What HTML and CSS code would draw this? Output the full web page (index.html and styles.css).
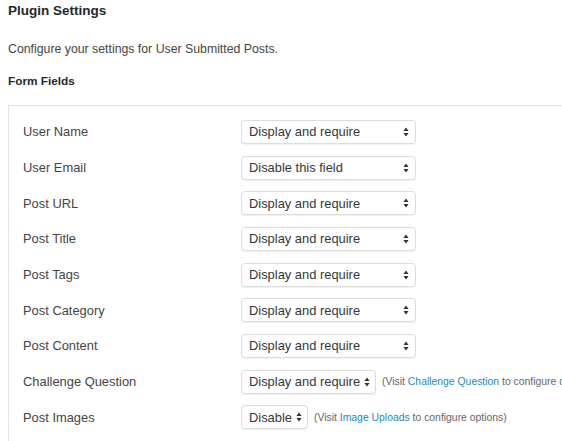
FILE: index.html
```html
<!DOCTYPE html>
<html lang="en">
<head>
<meta charset="utf-8">
<title>Plugin Settings</title>
<link rel="stylesheet" href="styles.css">
</head>
<body>
<div class="page">
  <h1 class="title">Plugin Settings</h1>
  <p class="intro">Configure your settings for User Submitted Posts.</p>
  <h2 class="section">Form Fields</h2>
  <div class="panel">
    <div class="row">
      <span class="label">User Name</span>
      <span class="select wide"><span class="val">Display and require</span><svg class="arr" width="6" height="10" viewBox="0 0 6 10"><path d="M3 0.5L5.6 4H0.4z M3 9.5L5.6 6H0.4z" fill="#333"/></svg></span>
    </div>
    <div class="row">
      <span class="label">User Email</span>
      <span class="select wide"><span class="val">Disable this field</span><svg class="arr" width="6" height="10" viewBox="0 0 6 10"><path d="M3 0.5L5.6 4H0.4z M3 9.5L5.6 6H0.4z" fill="#333"/></svg></span>
    </div>
    <div class="row">
      <span class="label">Post URL</span>
      <span class="select wide"><span class="val">Display and require</span><svg class="arr" width="6" height="10" viewBox="0 0 6 10"><path d="M3 0.5L5.6 4H0.4z M3 9.5L5.6 6H0.4z" fill="#333"/></svg></span>
    </div>
    <div class="row">
      <span class="label">Post Title</span>
      <span class="select wide"><span class="val">Display and require</span><svg class="arr" width="6" height="10" viewBox="0 0 6 10"><path d="M3 0.5L5.6 4H0.4z M3 9.5L5.6 6H0.4z" fill="#333"/></svg></span>
    </div>
    <div class="row">
      <span class="label">Post Tags</span>
      <span class="select wide"><span class="val">Display and require</span><svg class="arr" width="6" height="10" viewBox="0 0 6 10"><path d="M3 0.5L5.6 4H0.4z M3 9.5L5.6 6H0.4z" fill="#333"/></svg></span>
    </div>
    <div class="row">
      <span class="label">Post Category</span>
      <span class="select wide"><span class="val">Display and require</span><svg class="arr" width="6" height="10" viewBox="0 0 6 10"><path d="M3 0.5L5.6 4H0.4z M3 9.5L5.6 6H0.4z" fill="#333"/></svg></span>
    </div>
    <div class="row">
      <span class="label">Post Content</span>
      <span class="select wide"><span class="val">Display and require</span><svg class="arr" width="6" height="10" viewBox="0 0 6 10"><path d="M3 0.5L5.6 4H0.4z M3 9.5L5.6 6H0.4z" fill="#333"/></svg></span>
    </div>
    <div class="row">
      <span class="label">Challenge Question</span>
      <span class="select"><span class="val">Display and require</span><svg class="arr" width="6" height="10" viewBox="0 0 6 10"><path d="M3 0.5L5.6 4H0.4z M3 9.5L5.6 6H0.4z" fill="#333"/></svg></span>
      <span class="help">(Visit <a href="#">Challenge Question</a> to configure options)</span>
    </div>
    <div class="row">
      <span class="label">Post Images</span>
      <span class="select"><span class="val">Disable</span><svg class="arr" width="6" height="10" viewBox="0 0 6 10"><path d="M3 0.5L5.6 4H0.4z M3 9.5L5.6 6H0.4z" fill="#333"/></svg></span>
      <span class="help">(Visit <a href="#">Image Uploads</a> to configure options)</span>
    </div>
  </div>
</div>
</body>
</html>
```
FILE: styles.css
```css
html, body {
  margin: 0;
  padding: 0;
  background: #fff;
  overflow: hidden;
}
body {
  font-family: "Liberation Sans", Arial, sans-serif;
  color: #444;
  height: 441px;
}
.page {
  padding: 0 0 0 8px;
  width: 554px;
  height: 441px;
  overflow: hidden;
}
.title {
  margin: 0;
  padding-top: 3px;
  font-size: 13.5px;
  line-height: 16px;
  font-weight: bold;
  color: #23282d;
}
.intro {
  margin: 23px 0 0;
  font-size: 12.3px;
  line-height: 15px;
  color: #444;
}
.section {
  margin: 17px 0 0;
  font-size: 11.8px;
  line-height: 14px;
  font-weight: bold;
  color: #23282d;
}
.panel {
  margin-top: 17px;
  border: 1px solid #e3e3e3;
  border-right: none;
  border-bottom: none;
  padding: 8px 0 6px 14px;
}
.row {
  display: flex;
  align-items: center;
  height: 35.7px;
}
.label {
  width: 218px;
  flex: none;
  font-size: 12.9px;
  color: #444;
}
.select {
  display: inline-flex;
  flex: none;
  align-items: center;
  box-sizing: border-box;
  height: 24px;
  padding: 0 5px 0 7px;
  border: 1px solid #dcdcdc;
  border-radius: 4px;
  box-shadow: 0 1px 1px rgba(0,0,0,0.06);
  background: #fff;
  font-size: 12.9px;
  color: #32373c;
  gap: 4px;
  white-space: nowrap;
}
.select.wide {
  width: 175px;
  padding-right: 6px;
  justify-content: space-between;
}
.arr {
  flex: none;
  display: block;
}
.help {
  margin-left: 6px;
  font-size: 10.4px;
  color: #666;
  white-space: nowrap;
}
.help a {
  color: #2a87b8;
  text-decoration: none;
}
```
